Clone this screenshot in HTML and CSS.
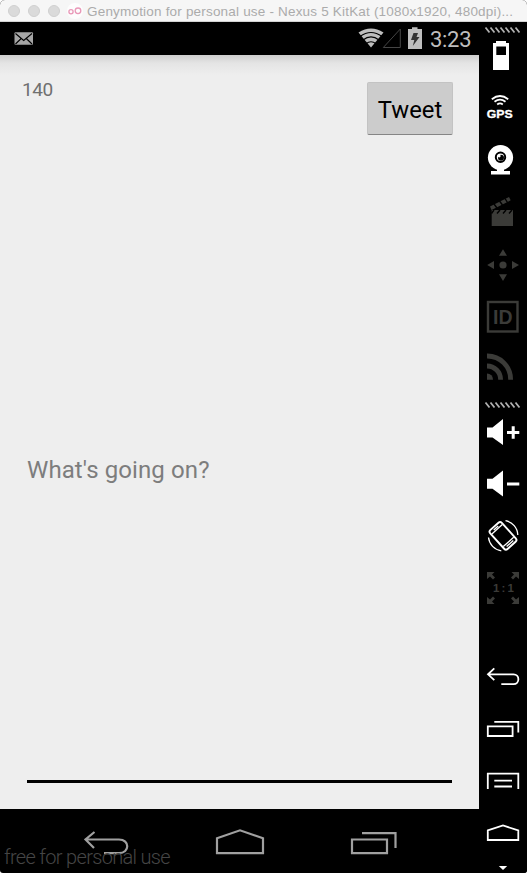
FILE: index.html
```html
<!DOCTYPE html>
<html lang="en">
<head>
<meta charset="utf-8">
<title>Genymotion for personal use</title>
<link rel="stylesheet" href="styles.css">
</head>
<body>
<div class="window">
  <header class="titlebar">
    <i class="dot"></i><i class="dot"></i><i class="dot"></i>
    <svg class="logo" width="16" height="16" viewBox="0 0 16 16"><circle cx="8" cy="8" r="8" fill="#fdfdfd"/><g fill="none" stroke="#e998b8" stroke-width="1.3"><circle cx="4" cy="8.7" r="2.1"/><circle cx="11" cy="7.8" r="2.8"/></g></svg>
    <span class="title">Genymotion for personal use - Nexus 5 KitKat (1080x1920, 480dpi)...</span>
  </header>
  <div class="main">
    <div class="phone">
      <div class="status">
        <svg class="mail" width="20" height="33" viewBox="0 0 20 33"><rect x=".5" y="10.3" width="18.5" height="12.5" rx="1" fill="#a5a5a5"/><path d="M1.5 11.5 9.7 18.5 18 11.5M1.5 22 7.2 16.5M18 22 12.3 16.5" fill="none" stroke="#000" stroke-width="1.1"/></svg>
        <svg class="signals" width="66" height="33" viewBox="0 0 66 33">
          <path d="M.5 10.5Q13 2.5 25.5 10.5L13 25.5Z" fill="#bebebe"/>
          <path d="M2 14.5Q13 6.5 24 14.5M5 18Q13 11.8 21 18M8 21.7Q13 17.8 18 21.7" fill="none" stroke="#000" stroke-width="1.2"/>
          <path d="M25.3 25.5 42.3 7V25.5Z" fill="none" stroke="#464646"/>
          <path d="M50 7H54V5.2H59.5V7H64V27H50Z" fill="#bebebe"/>
          <path d="M55.5 11H60L58.5 15H61.5L54.8 24 56.3 18H53Z" fill="#333"/>
        </svg>
        <span class="clock">3:23</span>
      </div>
      <div class="compose">
        <div class="top"><span class="count">140</span><button class="tweet">Tweet</button></div>
        <div class="field"><span>What's going on?</span></div>
      </div>
      <nav class="nav">
        <svg width="46" height="64" viewBox="0 0 46 64"><path d="M10.5 23 1.5 30.5 10 39M2 30.5H35C46 30.5 46 44.2 35 44.2H20"/></svg>
        <svg width="50" height="64" viewBox="0 0 50 64"><path d="M2 29.3 25 21.3 48 29.3V44.2H2Z"/></svg>
        <svg width="48" height="64" viewBox="0 0 48 64"><path d="M2 30.5H37V44.2H2ZM12 24.1H45.5V39"/></svg>
        <span class="watermark">free for personal use</span>
      </nav>
    </div>
    <aside class="tools">
      <svg height="12" viewBox="0 0 48 12"><path class="hatch" d="M6.5 5.5 10.5 10.5M11.5 5.5 15.5 10.5M16.5 5.5 20.5 10.5M21.5 5.5 25.5 10.5M26.5 5.5 30.5 10.5M31.5 5.5 35.5 10.5M36.5 5.5 40.5 10.5"/></svg>
      <svg height="47" viewBox="0 0 48 47"><path fill="#fff" fill-rule="evenodd" d="M14 9H17V7H27V9H30V36H14ZM17.3 12.5V21H27V12.5Z"/></svg>
      <svg height="52" viewBox="0 0 48 52"><path class="line" d="M12.8 18.3Q21 11.8 29.2 18.3M15.5 20.8Q21 16.6 26.5 20.8M18.2 23.5Q21 21.2 23.8 23.5"/><text class="bold" x="7.7" y="37.4" font-size="11.8" textLength="26" lengthAdjust="spacingAndGlyphs" fill="#fff" stroke="#fff" stroke-width=".3">GPS</text></svg>
      <svg height="52" viewBox="0 0 48 52"><circle cx="21.5" cy="24.6" r="12.6" fill="#fff"/><path d="M12 38H31V41.5H12ZM18 35H25V39H18Z" fill="#fff"/><circle cx="21.5" cy="24.3" r="4.7" fill="#fff" stroke="#000" stroke-width="2"/><circle cx="22" cy="24.8" r="3" fill="#000"/><circle cx="20.2" cy="23" r="1.4" fill="#fff"/></svg>
      <svg height="52" viewBox="0 0 48 52"><path class="dim" d="M12.7 25H34V41H12.7ZM11 21.5 30 12 31.7 15.3 12.5 25Z"/><path d="M15 25 12.5 28.5M21 25 18 28.5M27 25 24 28.5M33 25 30 28.5M15 19 18 23M20.5 16 23.5 20M26 13.5 28.5 17.5" stroke="#000" stroke-width="1.4"/></svg>
      <svg height="52" viewBox="0 0 48 52"><circle class="dim" cx="24" cy="28" r="3.6"/><path class="dim" d="M24 12.2 28 18.8H20ZM24 44 28 37.2H20ZM8.2 28 15 24V32ZM40 28 33 24V32Z"/></svg>
      <svg height="52" viewBox="0 0 48 52"><rect x="9" y="13" width="29.5" height="29.5" fill="none" stroke="#3b3b38" stroke-width="2.4"/><text class="bold dim" x="14" y="35" font-size="20" textLength="19.5" lengthAdjust="spacingAndGlyphs">ID</text></svg>
      <svg height="52" viewBox="0 0 48 52"><path class="dim" d="M8 32.5A6 6 0 0 1 14 38.8H8Z"/><path d="M8 25A13.6 13.6 0 0 1 21.6 38.8M8 15A23.3 23.3 0 0 1 31.6 38.8" fill="none" stroke="#3b3b38" stroke-width="4.8"/></svg>
      <svg height="18" viewBox="0 0 48 18"><path class="hatch" d="M6.5 9.5 10.5 14.5M11.5 9.5 15.5 14.5M16.5 9.5 20.5 14.5M21.5 9.5 25.5 14.5M26.5 9.5 30.5 14.5M31.5 9.5 35.5 14.5M36.5 9.5 40.5 14.5"/></svg>
      <svg height="48" viewBox="0 0 48 48"><path fill="#fff" d="M8 16.5H13.5L24 8V34L13.5 26.5H8ZM28 20H32.7V15.3H35.7V20H40.3V23H35.7V27.7H32.7V23H28Z"/></svg>
      <svg height="52" viewBox="0 0 48 52"><path fill="#fff" d="M8 19.8H13.5L24 11.4V37.5L13.5 29.8H8ZM28 23.5H40.3V26.5H28Z"/></svg>
      <svg height="52" viewBox="0 0 48 52"><g transform="rotate(-42 24 24.8)" fill="none" stroke="#fff"><rect x="16.2" y="12" width="15.6" height="25.6" rx="2.4" stroke-width="1.9"/><path d="M17 16H31M17 33H31M21 14.3H27M19.5 35.2H28.5" stroke-width="1.3"/></g><path d="M26.5 9.7A15 15 0 0 1 38.8 24M9.5 26.5A15 15 0 0 0 22.3 39.8" fill="none" stroke="#fff" stroke-width="1.3"/></svg>
      <svg height="52" viewBox="0 0 48 52"><path class="dim" d="M8 9H15.5L13 11.5 16 14.5 14 16.5 11 13.5 8 16ZM40 9H32.5L35 11.5 32 14.5 34 16.5 37 13.5 40 16ZM8 41H15.5L13 38.5 16 35.5 14 33.5 11 36.5 8 34ZM40 41H32.5L35 38.5 32 35.5 34 33.5 37 36.5 40 34Z"/><text class="bold dim" x="14" y="29.3" font-size="11.5" textLength="21">1:1</text></svg>
      <svg class="group" height="52" viewBox="0 0 48 52"><path class="line" d="M15.3 17.3 9 23.3 15.3 29.2M9 23.3H34.5C41 23.3 41 33.2 34.5 33.2H22.3"/></svg>
      <svg height="52" viewBox="0 0 48 52"><path class="line" d="M8.8 23.4H33.6V33H8.8ZM15.3 18.8H39.3V29.5"/></svg>
      <svg height="52" viewBox="0 0 48 52"><path class="line" d="M8.8 34V18.7H39.3V34M15.3 25.7H33M15.3 31.5H33"/></svg>
      <svg height="52" viewBox="0 0 48 52"><path class="line" d="M8.8 23.3 24 18.5 39.3 23.3V33H8.8Z"/></svg>
      <svg height="14" viewBox="0 0 48 14"><path fill="#fff" d="M19.8 7H28.2L24 11Z"/></svg>
    </aside>
  </div>
</div>
</body>
</html>
```
FILE: styles.css
```css
* { box-sizing: border-box; }
body { margin: 0; background: #fff; font-family: Roboto, sans-serif; }
.window { width: 527px; height: 873px; display: flex; flex-direction: column; border-radius: 5px 5px 3px 3px; overflow: hidden; background: #000; }
.titlebar { height: 22px; flex: none; display: flex; align-items: center; padding-left: 8px; background: #f6f6f6; border-bottom: 1px solid #d2d2d2; }
.dot { width: 12px; height: 12px; margin-right: 8px; border-radius: 50%; background: #dadada; border: 1px solid #cfcfcf; flex: none; }
.logo { margin-left: -1px; flex: none; }
.title { margin: 2px 0 0 4px; font: 13.5px "Liberation Sans", sans-serif; letter-spacing: 0.19px; color: #ababab; white-space: nowrap; }
.main { flex: 1; display: flex; min-height: 0; }
.phone { width: 479px; display: flex; flex-direction: column; }
.status { height: 33px; display: flex; align-items: center; padding-left: 14px; background: #000; }
.signals { margin-left: 324px; }
.clock { margin: 2px 0 0 6px; font-size: 22px; letter-spacing: -0.3px; color: #bebebe; line-height: 33px; }
.compose { flex: 1; display: flex; flex-direction: column; padding: 27px 27px 26px; background: linear-gradient(#cecece, #e4e4e4 8px, #eee 20px); }
.top { display: flex; justify-content: space-between; margin-left: -5px; }
.count { font-size: 19px; line-height: 16px; letter-spacing: -0.4px; color: #707070; }
.tweet { width: 86px; height: 53px; margin-right: -1px; padding: 2px 0 0; border: 1px solid #c3c3c3; border-bottom: 1.5px solid #858585; border-radius: 2px; background: #ccc; color: #000; font: 23.8px Roboto, sans-serif; }
.field { flex: 1; display: flex; align-items: center; padding-top: 24px; border-bottom: 3px solid #000; color: #7d7d7d; font-size: 24px; letter-spacing: 0.1px; }
.nav { height: 64px; position: relative; display: flex; padding-left: 84px; gap: 85px; }
.nav svg { fill: none; stroke: #a0a0a0; stroke-width: 2.2; }
.watermark { position: absolute; left: 4px; top: 36px; font-size: 20px; font-weight: 300; letter-spacing: -0.68px; line-height: 24px; color: #454545; white-space: nowrap; }
.tools { width: 48px; display: flex; flex-direction: column; background: #000; }
.tools svg { width: 48px; flex: none; }
.tools .group { margin-top: 36px; }
.hatch { fill: none; stroke: #b0b0b0; stroke-width: 1.8; }
.line { fill: none; stroke: #fff; stroke-width: 1.8; }
.dim { fill: #3b3b38; }
.bold { font-family: "Liberation Sans", sans-serif; font-weight: 700; }
```
